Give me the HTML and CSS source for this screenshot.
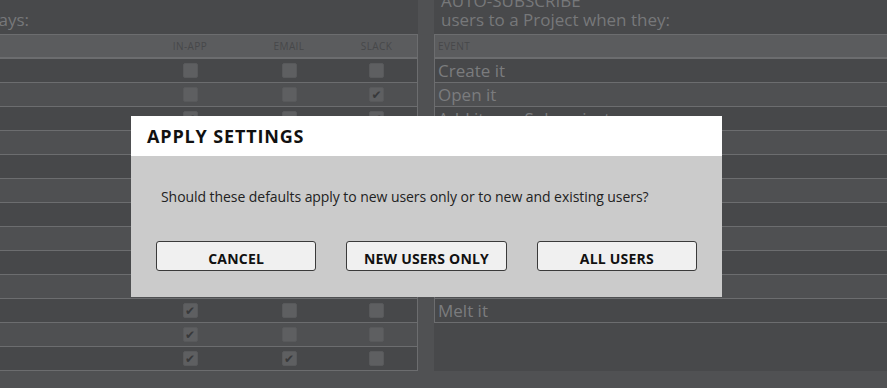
FILE: index.html
```html
<!DOCTYPE html>
<html lang="en">
<head>
  <meta charset="UTF-8">
  <meta name="viewport" content="width=device-width, initial-scale=1.0">
  <title>Default notification settings</title>
  <link rel="stylesheet" href="styles.css">
</head>
<body>
  <div class="panels">
    <section class="panel panel-notify">
      <h2 class="panel-title">NOTIFY<br>users about Project activity in these ways:</h2>
      <div class="table">
        <div class="row row-head">
          <span class="cell cell-label">EVENT</span>
          <span class="cell">IN-APP</span>
          <span class="cell">EMAIL</span>
          <span class="cell">SLACK</span>
        </div>
        <div class="row"><span class="cell cell-label">Are mentioned</span><span class="cell"><i class="box"></i></span><span class="cell"><i class="box"></i></span><span class="cell"><i class="box"></i></span></div>
        <div class="row"><span class="cell cell-label">Are assigned</span><span class="cell"><i class="box"></i></span><span class="cell"><i class="box"></i></span><span class="cell"><i class="box on"></i></span></div>
        <div class="row"><span class="cell cell-label">Get a reply</span><span class="cell"><i class="box on"></i></span><span class="cell"><i class="box"></i></span><span class="cell"><i class="box on"></i></span></div>
        <div class="row"><span class="cell cell-label">Task is due</span><span class="cell"><i class="box on"></i></span><span class="cell"><i class="box on"></i></span><span class="cell"><i class="box"></i></span></div>
        <div class="row"><span class="cell cell-label">Task is done</span><span class="cell"><i class="box on"></i></span><span class="cell"><i class="box"></i></span><span class="cell"><i class="box"></i></span></div>
        <div class="row"><span class="cell cell-label">File uploaded</span><span class="cell"><i class="box on"></i></span><span class="cell"><i class="box"></i></span><span class="cell"><i class="box"></i></span></div>
        <div class="row"><span class="cell cell-label">Comment added</span><span class="cell"><i class="box on"></i></span><span class="cell"><i class="box"></i></span><span class="cell"><i class="box"></i></span></div>
        <div class="row"><span class="cell cell-label">Status changed</span><span class="cell"><i class="box on"></i></span><span class="cell"><i class="box"></i></span><span class="cell"><i class="box"></i></span></div>
        <div class="row"><span class="cell cell-label">Project moved</span><span class="cell"><i class="box on"></i></span><span class="cell"><i class="box"></i></span><span class="cell"><i class="box"></i></span></div>
        <div class="row"><span class="cell cell-label">Project archived</span><span class="cell"><i class="box on"></i></span><span class="cell"><i class="box"></i></span><span class="cell"><i class="box"></i></span></div>
        <div class="row"><span class="cell cell-label">Project melted</span><span class="cell"><i class="box on"></i></span><span class="cell"><i class="box"></i></span><span class="cell"><i class="box"></i></span></div>
        <div class="row"><span class="cell cell-label">Invited</span><span class="cell"><i class="box on"></i></span><span class="cell"><i class="box"></i></span><span class="cell"><i class="box"></i></span></div>
        <div class="row"><span class="cell cell-label">Removed</span><span class="cell"><i class="box on"></i></span><span class="cell"><i class="box on"></i></span><span class="cell"><i class="box"></i></span></div>
      </div>
    </section>

    <section class="panel panel-subscribe">
      <h2 class="panel-title">AUTO-SUBSCRIBE<br>users to a Project when they:</h2>
      <div class="table">
        <div class="row row-head"><span class="cell cell-label">EVENT</span></div>
        <div class="row"><span class="cell cell-label">Create it</span></div>
        <div class="row"><span class="cell cell-label">Open it</span></div>
        <div class="row"><span class="cell cell-label">Add it as a Subproject</span></div>
        <div class="row"><span class="cell cell-label">Comment on it</span></div>
        <div class="row"><span class="cell cell-label">Edit it</span></div>
        <div class="row"><span class="cell cell-label">Assign a task in it</span></div>
        <div class="row"><span class="cell cell-label">Complete a task in it</span></div>
        <div class="row"><span class="cell cell-label">Upload a file to it</span></div>
        <div class="row"><span class="cell cell-label">Move it</span></div>
        <div class="row"><span class="cell cell-label">Archive it</span></div>
        <div class="row"><span class="cell cell-label">Melt it</span></div>
      </div>
    </section>
  </div>

  <div class="modal">
    <div class="modal-head">APPLY SETTINGS</div>
    <div class="modal-body">
      <p class="modal-text">Should these defaults apply to new users only or to new and existing users?</p>
      <div class="modal-actions">
        <button class="btn">CANCEL</button>
        <button class="btn">NEW USERS ONLY</button>
        <button class="btn">ALL USERS</button>
      </div>
    </div>
  </div>
</body>
</html>
```

FILE: styles.css
```css
body {
  margin: 0;
  overflow: hidden;
  background: #505153;
  font-family: "Open Sans", "Liberation Sans", sans-serif;
}
.panels {
  display: flex;
  gap: 16px;
  margin: -9px 0 0 -307px;
}
.panel {
  flex-shrink: 0;
  background: #48494b;
}
.panel-notify {
  width: 725px;
}
.panel-subscribe {
  width: 480px;
}
.panel-title {
  margin: 0 0 5px;
  padding: 0 7px;
  font-size: 17px;
  font-weight: 400;
  line-height: 19px;
  color: #77787a;
  white-space: nowrap;
}
.table {
  border: 1px solid #6c6d6f;
  border-bottom: none;
}
.row {
  display: grid;
  grid-template-columns: 1fr 104px 94px 81px;
  height: 23px;
  border-bottom: 1px solid #6c6d6f;
  background: #47484a;
}
.row:nth-child(odd) {
  background: #4f5052;
}
.panel-subscribe .row {
  grid-template-columns: 1fr;
}
.row-head,
.row-head:nth-child(odd) {
  height: 22px;
  border-bottom-width: 2px;
  background: #5b5c5e;
}
.cell {
  display: flex;
  align-items: center;
  justify-content: center;
  font-size: 17px;
  color: #7b7c7e;
  white-space: nowrap;
}
.cell-label {
  justify-content: flex-start;
  padding-left: 3px;
}
.row-head .cell {
  font-size: 10px;
  letter-spacing: .4px;
  color: #47484a;
}
.box {
  display: flex;
  align-items: center;
  justify-content: center;
  width: 15px;
  height: 15px;
  box-sizing: border-box;
  background: #5e5f61;
  border: 1px solid #58595b;
  border-radius: 2px;
}
.box.on::after {
  content: "\2714";
  font-family: "DejaVu Sans", sans-serif;
  font-size: 12px;
  font-style: normal;
  line-height: 1;
  color: #38393b;
}

.modal {
  position: fixed;
  left: 131px;
  top: 116px;
  width: 591px;
  background: #cbcbcb;
}
.modal-head {
  height: 40px;
  padding-left: 16px;
  background: #fff;
  font-size: 18px;
  font-weight: 700;
  line-height: 40px;
  letter-spacing: .85px;
  color: #111;
}
.modal-body {
  padding: 31px 25px 26px;
}
.modal-text {
  margin: 0 5px;
  font-size: 14px;
  line-height: 20px;
  letter-spacing: -.06px;
  color: #222;
}
.modal-actions {
  display: flex;
  gap: 30px;
  margin-top: 34px;
}
.btn {
  flex: 1;
  height: 30px;
  padding: 5px 0 0;
  background: #f0f0f0;
  border: 1px solid #3a3a3a;
  border-radius: 3px;
  font-family: inherit;
  font-size: 14px;
  font-weight: 700;
  line-height: 22px;
  letter-spacing: .2px;
  color: #111;
  cursor: pointer;
}
```
